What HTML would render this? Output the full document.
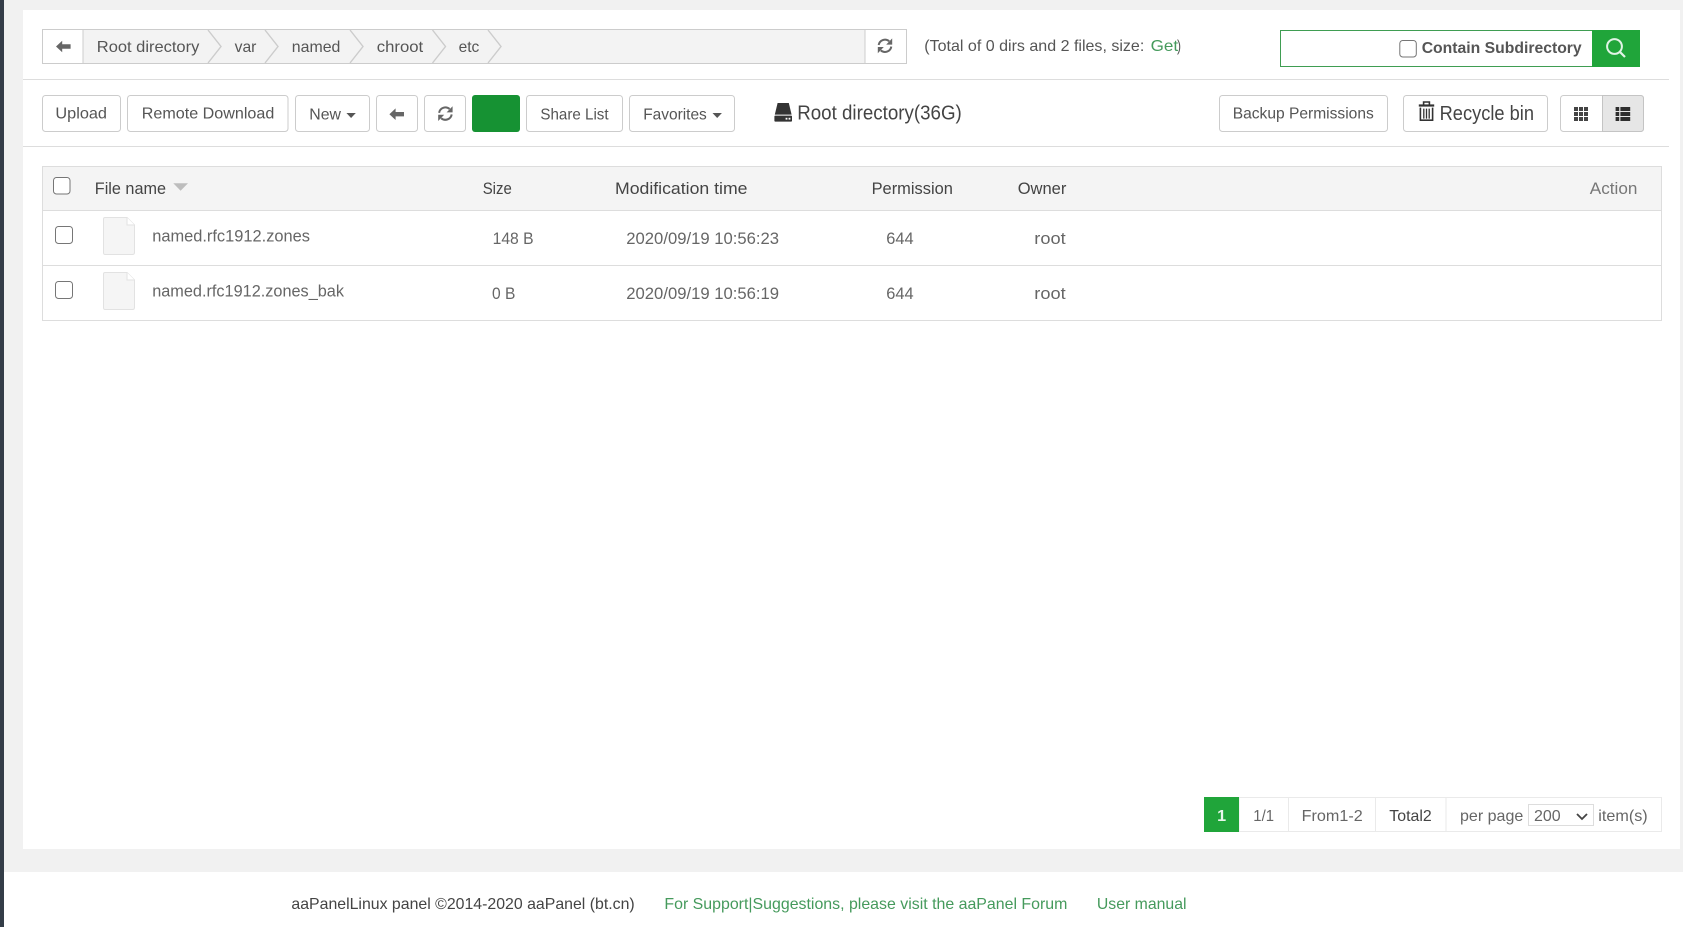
<!DOCTYPE html>
<html lang="en">
<head>
<meta charset="utf-8">
<title>aaPanel Files</title>
<style>
html,body{margin:0;padding:0;background:#f1f1f1;width:1683px;height:927px;overflow:hidden}
svg{display:block}
text{font-family:"Liberation Sans",Arial,sans-serif;fill:#555;font-size:16px}
.btn{fill:#fff;stroke:#ccc;stroke-width:1}
.chev{fill:none;stroke:#ccc;stroke-width:1.4}
.cb{fill:#fff;stroke:#767676;stroke-width:1}
.cell{fill:#666;font-size:16.5px}
.hd{fill:#444;font-size:17px}
.pg{fill:#666;font-size:16px}
.gr{fill:#459a5c}
</style>
</head>
<body>
<svg xmlns="http://www.w3.org/2000/svg" width="1683" height="927" viewBox="0 0 1683 927">
<defs>
<g id="refresh" fill="#666" stroke="none">
  <path d="M-6.3 -0.8A6.4 6.4 0 0 1 4.2 -4.6" fill="none" stroke="#666" stroke-width="2"/>
  <path d="M7.2 -7.4V-1.2H1.2Z"/>
  <path d="M6.3 0.8A6.4 6.4 0 0 1 -4.2 4.6" fill="none" stroke="#666" stroke-width="2"/>
  <path d="M-7.2 7.4V1.2H-1.2Z"/>
</g>
<path id="arrow" d="M0 0L6.2 -5.8V-2.2H14.6V2.2H6.2V5.8Z" fill="#666"/>
<g id="file">
  <path d="M2 0.5H24L31.5 8V35.5Q31.5 37.5 29.5 37.5H2Q0.5 37.5 0.5 35.5V2Q0.5 0.5 2 0.5Z" fill="#f5f5f5" stroke="#e2e2e2"/>
  <path d="M24 0.5V8H31.5" fill="#fff" stroke="#e2e2e2"/>
</g>
</defs>

<!-- page frame -->
<rect x="0" y="0" width="1683" height="927" fill="#f1f1f1"/>
<rect x="0" y="0" width="4" height="927" fill="#343d48"/>
<rect x="23" y="10" width="1657" height="839" fill="#fff"/>
<rect x="4" y="872" width="1679" height="55" fill="#fff"/>

<!-- breadcrumb bar -->
<rect x="42.5" y="29.5" width="864" height="34" fill="#f3f3f3" stroke="#ccc"/>
<rect x="43" y="30" width="40" height="33" fill="#fff"/>
<rect x="865" y="30" width="41" height="33" fill="#fff"/>
<line x1="83" y1="29.5" x2="83" y2="63.5" stroke="#ccc"/>
<line x1="865" y1="29.5" x2="865" y2="63.5" stroke="#ccc"/>
<use href="#arrow" x="56" y="46.5"/>
<text x="96.8" y="52" textLength="102.5" lengthAdjust="spacingAndGlyphs">Root directory</text>
<path class="chev" d="M208 30L221 46.5L208 63"/>
<text x="234.6" y="52" textLength="21.8" lengthAdjust="spacingAndGlyphs">var</text>
<path class="chev" d="M265 30L278 46.5L265 63"/>
<text x="291.8" y="52" textLength="48.6" lengthAdjust="spacingAndGlyphs">named</text>
<path class="chev" d="M350 30L363 46.5L350 63"/>
<text x="376.8" y="52" textLength="46.4" lengthAdjust="spacingAndGlyphs">chroot</text>
<path class="chev" d="M432.5 30L445.5 46.5L432.5 63"/>
<text x="458.6" y="52" textLength="20.7" lengthAdjust="spacingAndGlyphs">etc</text>
<path class="chev" d="M488 30L501 46.5L488 63"/>
<use href="#refresh" transform="translate(885 45.8)"/>

<text x="924.3" y="51" textLength="220" lengthAdjust="spacingAndGlyphs">(Total of 0 dirs and 2 files, size:</text>
<text class="gr" x="1150.6" y="51" textLength="27.5" lengthAdjust="spacingAndGlyphs">Get</text>
<text x="1177" y="51" textLength="4" lengthAdjust="spacingAndGlyphs">)</text>

<!-- search -->
<rect x="1280.5" y="30.5" width="359" height="36" fill="#fff" stroke="#3f9d52"/>
<rect x="1592" y="30" width="48" height="37" fill="#20a53a"/>
<rect class="cb" x="1399.8" y="40.5" width="16.5" height="16.5" rx="3"/>
<text x="1421.7" y="53" textLength="160" lengthAdjust="spacingAndGlyphs" font-weight="bold" style="font-size:16px">Contain Subdirectory</text>
<circle cx="1614.5" cy="46.5" r="7.4" fill="none" stroke="#e2f4e6" stroke-width="2"/>
<line x1="1619.8" y1="51.8" x2="1625" y2="57" stroke="#e2f4e6" stroke-width="2.2"/>

<line x1="23" y1="79.5" x2="1669" y2="79.5" stroke="#ddd"/>

<!-- toolbar -->
<rect class="btn" x="42.5" y="95.5" width="78" height="36" rx="3"/>
<text x="55.4" y="118.6" textLength="51.6" lengthAdjust="spacingAndGlyphs">Upload</text>
<rect class="btn" x="127.5" y="95.5" width="160.5" height="36" rx="3"/>
<text x="141.8" y="118.6" textLength="132.5" lengthAdjust="spacingAndGlyphs">Remote Download</text>
<rect class="btn" x="295.5" y="95.5" width="74" height="36" rx="3"/>
<text x="309.3" y="119.6" textLength="31.7" lengthAdjust="spacingAndGlyphs">New</text>
<path d="M346.4 113H355.8L351.1 118Z" fill="#555"/>
<rect class="btn" x="376.5" y="95.5" width="41" height="36" rx="3"/>
<use href="#arrow" x="389.4" y="114.2"/>
<rect class="btn" x="424.5" y="95.5" width="41" height="36" rx="3"/>
<use href="#refresh" transform="translate(445.4 113.6)"/>
<rect x="472" y="95" width="48" height="37" rx="3" fill="#169233"/>
<rect class="btn" x="526.5" y="95.5" width="96" height="36" rx="3"/>
<text x="540.4" y="119.6" textLength="68.2" lengthAdjust="spacingAndGlyphs">Share List</text>
<rect class="btn" x="629.5" y="95.5" width="105" height="36" rx="3"/>
<text x="643.2" y="119.6" textLength="63.6" lengthAdjust="spacingAndGlyphs">Favorites</text>
<path d="M712.5 113H721.9L717.2 118Z" fill="#555"/>

<!-- disk -->
<path d="M777.6 103H788.8L791.6 114.6H774.8Z" fill="#333"/>
<rect x="774.4" y="115.6" width="17.6" height="6" rx="0.8" fill="#333"/>
<rect x="785.6" y="117.8" width="1.8" height="1.8" fill="#fff"/>
<rect x="788.6" y="117.8" width="1.8" height="1.8" fill="#fff"/>
<text x="797.2" y="119.6" textLength="164.6" lengthAdjust="spacingAndGlyphs" style="font-size:20px;fill:#444">Root directory(36G)</text>

<rect class="btn" x="1219.5" y="95.5" width="168" height="36" rx="3"/>
<text x="1232.7" y="118.6" textLength="141.1" lengthAdjust="spacingAndGlyphs">Backup Permissions</text>
<rect class="btn" x="1403.5" y="95.5" width="144" height="36" rx="3"/>
<path d="M1423.6 104.6V102H1429.4V104.6" fill="none" stroke="#333" stroke-width="1.6"/>
<rect x="1418.8" y="104.4" width="15.4" height="2.2" fill="#333"/>
<path d="M1420.4 107.6V120.2H1432.6V107.6" fill="none" stroke="#333" stroke-width="1.6"/>
<path d="M1423.8 108.6V118.6M1426.5 108.6V118.6M1429.2 108.6V118.6" fill="none" stroke="#333" stroke-width="1.3"/>
<text x="1439.6" y="119.8" textLength="94.4" lengthAdjust="spacingAndGlyphs" style="font-size:20.5px;fill:#444">Recycle bin</text>

<!-- view toggles -->
<rect class="btn" x="1560.5" y="95.5" width="83" height="36" rx="3"/>
<path d="M1602.5 95.5H1640.5Q1643.5 95.5 1643.5 98.5V128.5Q1643.5 131.5 1640.5 131.5H1602.5Z" fill="#e6e6e6" stroke="#c4c4c4"/>
<g fill="#444">
<rect x="1574" y="107" width="4" height="4"/><rect x="1579" y="107" width="4" height="4"/><rect x="1584" y="107" width="4" height="4"/>
<rect x="1574" y="112" width="4" height="4"/><rect x="1579" y="112" width="4" height="4"/><rect x="1584" y="112" width="4" height="4"/>
<rect x="1574" y="117" width="4" height="4"/><rect x="1579" y="117" width="4" height="4"/><rect x="1584" y="117" width="4" height="4"/>
</g>
<g fill="#2e2e2e">
<rect x="1615.6" y="107" width="3.6" height="4"/><rect x="1620.4" y="107" width="9.8" height="4"/>
<rect x="1615.6" y="112" width="3.6" height="4"/><rect x="1620.4" y="112" width="9.8" height="4"/>
<rect x="1615.6" y="117" width="3.6" height="4"/><rect x="1620.4" y="117" width="9.8" height="4"/>
</g>

<line x1="23" y1="146.5" x2="1669" y2="146.5" stroke="#ddd"/>

<!-- table -->
<rect x="42.5" y="166.5" width="1619" height="154" fill="#fff" stroke="#ddd"/>
<rect x="43" y="167" width="1618" height="43" fill="#f4f4f4"/>
<line x1="42.5" y1="210.5" x2="1661.5" y2="210.5" stroke="#ddd"/>
<line x1="42.5" y1="265.5" x2="1661.5" y2="265.5" stroke="#ddd"/>

<rect class="cb" x="53.5" y="177.5" width="16.5" height="16.5" rx="3"/>
<text class="hd" x="94.8" y="194" textLength="71.2" lengthAdjust="spacingAndGlyphs">File name</text>
<path d="M173.3 183.3H188L180.6 190.7Z" fill="#bdbdbd"/>
<text class="hd" x="482.7" y="194" textLength="29.1" lengthAdjust="spacingAndGlyphs">Size</text>
<text class="hd" x="615" y="194" textLength="132.5" lengthAdjust="spacingAndGlyphs">Modification time</text>
<text class="hd" x="871.6" y="194" textLength="81.3" lengthAdjust="spacingAndGlyphs">Permission</text>
<text class="hd" x="1017.7" y="194" textLength="48.7" lengthAdjust="spacingAndGlyphs">Owner</text>
<text class="hd" x="1589.8" y="194" textLength="47.6" lengthAdjust="spacingAndGlyphs" style="fill:#777">Action</text>

<rect class="cb" x="55.5" y="226.5" width="17" height="17" rx="3"/>
<use href="#file" x="103" y="217"/>
<text class="cell" x="152.2" y="241.5" textLength="157.8" lengthAdjust="spacingAndGlyphs">named.rfc1912.zones</text>
<text class="cell" x="492.6" y="244" textLength="41" lengthAdjust="spacingAndGlyphs">148 B</text>
<text class="cell" x="626.3" y="244" textLength="152.7" lengthAdjust="spacingAndGlyphs">2020/09/19 10:56:23</text>
<text class="cell" x="886.2" y="244" textLength="27.4" lengthAdjust="spacingAndGlyphs">644</text>
<text class="cell" x="1034.3" y="244" textLength="31.4" lengthAdjust="spacingAndGlyphs">root</text>

<rect class="cb" x="55.5" y="281.5" width="17" height="17" rx="3"/>
<use href="#file" x="103" y="272"/>
<text class="cell" x="152.2" y="296.5" textLength="191.8" lengthAdjust="spacingAndGlyphs">named.rfc1912.zones_bak</text>
<text class="cell" x="492" y="299" textLength="23.4" lengthAdjust="spacingAndGlyphs">0 B</text>
<text class="cell" x="626.3" y="299" textLength="152.7" lengthAdjust="spacingAndGlyphs">2020/09/19 10:56:19</text>
<text class="cell" x="886.2" y="299" textLength="27.4" lengthAdjust="spacingAndGlyphs">644</text>
<text class="cell" x="1034.3" y="299" textLength="31.4" lengthAdjust="spacingAndGlyphs">root</text>

<!-- pagination -->
<rect x="1239" y="797.5" width="422.5" height="34" fill="#fff" stroke="#eaeaea"/>
<rect x="1204" y="797" width="35" height="35" fill="#20a53a"/>
<path d="M1288.5 797.5V831.5M1375.5 797.5V831.5M1446 797.5V831.5" stroke="#eaeaea" fill="none"/>
<text x="1217.2" y="821" style="font-size:16px;fill:#e9f7ec;font-weight:bold" textLength="9" lengthAdjust="spacingAndGlyphs">1</text>
<text class="pg" x="1253.3" y="821" textLength="20.7" lengthAdjust="spacingAndGlyphs">1/1</text>
<text class="pg" x="1301.7" y="821" textLength="61" lengthAdjust="spacingAndGlyphs">From1-2</text>
<text class="pg" x="1389.3" y="821" textLength="42.4" lengthAdjust="spacingAndGlyphs" style="fill:#444">Total2</text>
<text class="pg" x="1460" y="821" textLength="63.3" lengthAdjust="spacingAndGlyphs">per page</text>
<rect x="1528.5" y="804.5" width="65" height="21" fill="#fff" stroke="#ddd"/>
<text class="pg" x="1534" y="821" textLength="26.7" lengthAdjust="spacingAndGlyphs">200</text>
<path d="M1577 814L1582 819L1587 814" fill="none" stroke="#444" stroke-width="1.8"/>
<text class="pg" x="1598.3" y="821" textLength="49.4" lengthAdjust="spacingAndGlyphs">item(s)</text>

<!-- footer -->
<text x="291.4" y="909" textLength="343.3" lengthAdjust="spacingAndGlyphs" style="fill:#444">aaPanelLinux panel ©2014-2020 aaPanel (bt.cn)</text>
<text class="gr" x="664.4" y="909" textLength="403" lengthAdjust="spacingAndGlyphs">For Support|Suggestions, please visit the aaPanel Forum</text>
<text class="gr" x="1096.9" y="909" textLength="89.6" lengthAdjust="spacingAndGlyphs">User manual</text>
</svg>
</body>
</html>
